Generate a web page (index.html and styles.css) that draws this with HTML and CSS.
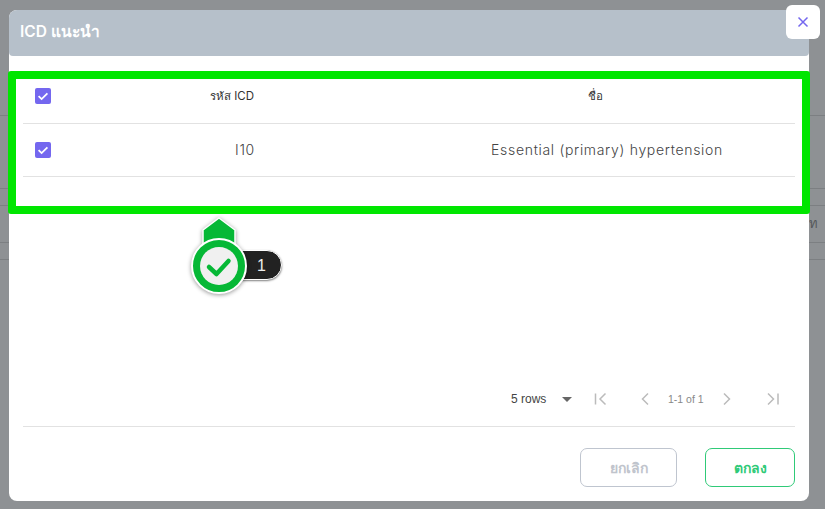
FILE: index.html
```html
<!DOCTYPE html>
<html lang="th">
<head>
<meta charset="utf-8">
<title>ICD แนะนำ</title>
<link rel="stylesheet" href="styles.css">
</head>
<body>
<div class="page">
  <div class="under">
    <div class="under-row r1"></div>
    <div class="under-row r2"></div>
    <div class="under-row r3"></div>
    <div class="under-row r4"><span class="under-text">ท</span></div>
    <div class="under-row r5"></div>
  </div>
  <div class="modal">
    <div class="modal-head">ICD แนะนำ</div>
    <div class="modal-body">
      <div class="grid-row head-row">
        <div class="cell-check"><span class="check"><svg viewBox="0 0 16 16" width="16" height="16"><path d="M3.600 8.200l3 2.900 5.800-5.700" fill="none" stroke="#fff" stroke-width="1.800"/></svg></span></div>
        <div class="cell-code">รหัส ICD</div>
        <div class="cell-name">ชื่อ</div>
      </div>
      <div class="grid-row data-row">
        <div class="cell-check"><span class="check"><svg viewBox="0 0 16 16" width="16" height="16"><path d="M3.600 8.200l3 2.900 5.800-5.700" fill="none" stroke="#fff" stroke-width="1.800"/></svg></span></div>
        <div class="cell-code">I10</div>
        <div class="cell-name">Essential (primary) hypertension</div>
      </div>
      <div class="spacer"></div>
      <div class="pager">
        <span class="rows">5 rows</span>
        <svg class="caret" width="10" height="5" viewBox="0 0 10 5"><path d="M0 0h10L5 5z" fill="#666"/></svg>
        <svg class="pg first" width="14" height="14" viewBox="0 0 14 14"><path d="M1.500 1.500v11M11.500 1.500L6 7l5.500 5.500" fill="none" stroke="#bbb" stroke-width="1.500"/></svg>
        <svg class="pg prev" width="10" height="14" viewBox="0 0 10 14"><path d="M8 1.500L2.500 7 8 12.500" fill="none" stroke="#bbb" stroke-width="1.500"/></svg>
        <span class="range">1-1 of 1</span>
        <svg class="pg next" width="10" height="14" viewBox="0 0 10 14"><path d="M2 1.500L7.500 7 2 12.500" fill="none" stroke="#bbb" stroke-width="1.500"/></svg>
        <svg class="pg last" width="14" height="14" viewBox="0 0 14 14"><path d="M2 1.500L7.500 7 2 12.500M12 1.500v11" fill="none" stroke="#bbb" stroke-width="1.500"/></svg>
      </div>
      <div class="actions">
        <button class="btn cancel">ยกเลิก</button>
        <button class="btn ok">ตกลง</button>
      </div>
    </div>
  </div>
  <button class="close" aria-label="close"><svg width="12" height="12" viewBox="0 0 12 12"><path d="M1.500 1.500l9 9M10.500 1.500l-9 9" stroke="#7467ef" stroke-width="1.500" fill="none"/></svg></button>
  <div class="highlight"></div>
  <div class="marker">
    <div class="badge">1</div>
    <svg class="pin" width="60" height="78" viewBox="0 0 60 78">
      <path d="M29 1 L45 13 V35 H13 V13 Z" fill="#06b836" stroke="#fff" stroke-width="1.500"/>
      <circle cx="29" cy="49" r="27" fill="#06b836" stroke="#fff" stroke-width="2"/>
      <circle cx="29" cy="49" r="19" fill="#f0f0f0"/>
      <path d="M19 50l7.500 7 12-13" fill="none" stroke="#06b836" stroke-width="4.500" stroke-linecap="round" stroke-linejoin="round"/>
    </svg>
  </div>
</div>
</body>
</html>
```

FILE: styles.css
```css
* { box-sizing: border-box; }
html, body { margin: 0; padding: 0; }
body { width: 825px; height: 509px; overflow: hidden; font-family: "Inter", "Noto Sans", "Liberation Sans", sans-serif; }
.page { position: relative; width: 825px; height: 509px; background: #8e9194; overflow: hidden; }

.under { display: flex; flex-direction: column; }
.under-row { border-bottom: 1px solid #7c7f82; }
.r1 { height: 116px; }
.r2 { height: 73px; }
.r3 { height: 17px; }
.r4 { height: 37px; position: relative; }
.r5 { height: 17px; }
.under-text { position: absolute; left: 809px; top: 7px; font-size: 13px; color: #55585a; font-family: "Noto Sans CJK SC", "Noto Sans", sans-serif; }

.modal { position: absolute; left: 9px; top: 10px; width: 800px; height: 491px; background: #fff; border-radius: 8px; display: flex; flex-direction: column; }
.modal-head { height: 46px; flex: none; background: #b6c0ca; border-radius: 8px 8px 4px 4px; color: #fff; font-size: 15.500px; font-weight: 600; line-height: 44px; padding-left: 11px; }
.modal-body { flex: 1; display: flex; flex-direction: column; padding: 14px; }

.grid-row { display: grid; align-items: center; border-bottom: 1px solid #e2e2e2; }
.head-row { height: 54px; grid-template-columns: 60px 298px 1fr; font-size: 11.500px; color: #333; padding-bottom: 2px; }
.data-row { height: 53px; grid-template-columns: 60px 324px 1fr; font-size: 14px; font-weight: 300; color: #444; letter-spacing: 0.68px; padding-bottom: 1px; }
.cell-check { padding-left: 12px; display: flex; }
.cell-code { text-align: center; }
.cell-name { text-align: center; }
.head-row .cell-name { padding-left: 14px; }
.data-row .cell-name { padding-left: 12px; }
.check { width: 16px; height: 16px; border-radius: 2px; background: #7467ef; display: block; }
.check svg { display: block; }

.spacer { flex: 1; }
.pager { display: flex; align-items: center; height: 28px; margin-bottom: 13px; font-family: "Liberation Sans", sans-serif; font-size: 12px; color: #444; padding-left: 488px; }
.rows { width: 51px; }
.caret { margin-right: 21.500px; }
.first { margin-right: 32px; }
.prev { margin-right: 18.500px; }
.range { width: 54px; font-size: 10.500px; color: #888; }
.next { margin-right: 34px; }
.actions { border-top: 1px solid #e2e2e2; padding-top: 21px; display: flex; justify-content: flex-end; gap: 28px; }
.btn { height: 39px; background: #fff; border-radius: 7px; font-family: inherit; font-size: 14px; font-weight: 600; padding: 0; }
.cancel { width: 97px; border: 1px solid #bfc5cf; color: #c0c4cc; }
.ok { width: 90px; border: 1px solid #2fca78; color: #2fca78; }

.close { position: absolute; left: 786px; top: 5px; width: 34px; height: 34px; border: 0; border-radius: 6px; background: #fff; display: flex; align-items: center; justify-content: center; padding: 0; }

.highlight { position: absolute; left: 8px; top: 71px; width: 802px; height: 143px; border: 8px solid #00e600; border-radius: 3px; }

.marker { position: absolute; left: 190px; top: 217px; width: 95px; height: 78px; }
.pin { position: absolute; left: 0; top: 0; filter: drop-shadow(0 1px 2px rgba(0,0,0,.4)); }
.badge { position: absolute; left: 36px; top: 33px; width: 56px; height: 30px; border-radius: 15px; background: #222; border: 1px solid #fff; box-shadow: 0 1px 2px rgba(0,0,0,.5); color: #eee; font-family: "Liberation Sans", sans-serif; font-size: 16px; line-height: 29px; text-align: right; padding-right: 15px; }
```
